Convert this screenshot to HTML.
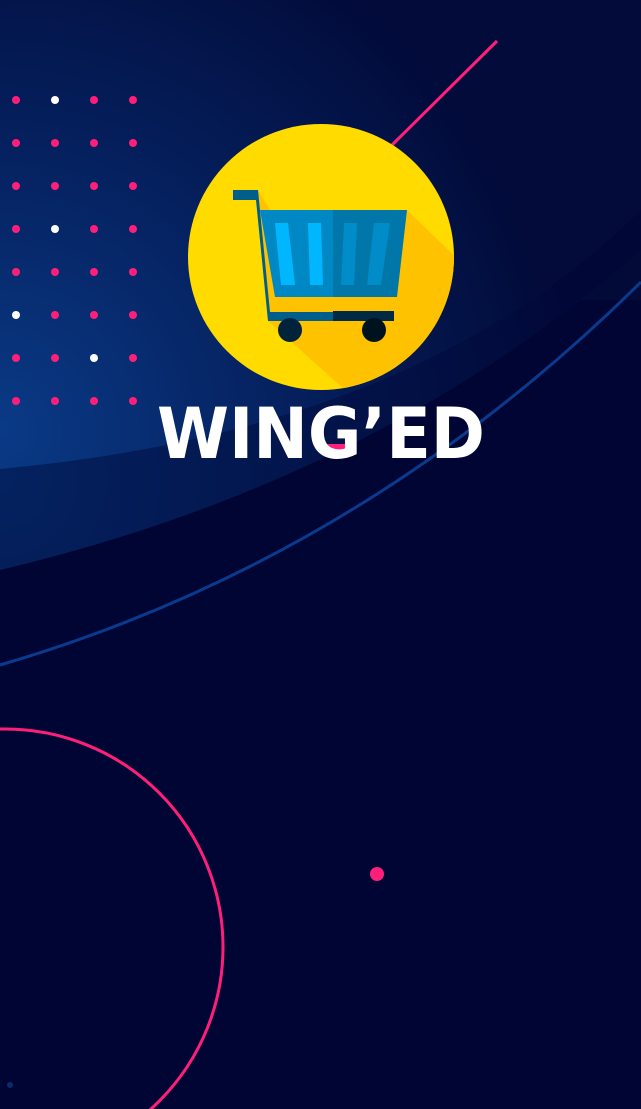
<!DOCTYPE html>
<html><head><meta charset="utf-8"><style>
html,body{margin:0;padding:0;background:#000533;overflow:hidden;width:641px;height:1109px;}
svg{display:block}
</style></head><body>
<svg width="641" height="1109" viewBox="0 0 641 1109" xmlns="http://www.w3.org/2000/svg">
<defs>
<radialGradient id="g1" cx="0" cy="430" r="560" gradientUnits="userSpaceOnUse">
<stop offset="0" stop-color="#0a3a86"/>
<stop offset="0.5" stop-color="#05215f"/>
<stop offset="1" stop-color="#020b3a"/>
</radialGradient>
<radialGradient id="g2" cx="0" cy="480" r="600" gradientUnits="userSpaceOnUse">
<stop offset="0" stop-color="#042260"/>
<stop offset="1" stop-color="#010838"/>
</radialGradient>
</defs>
<rect width="641" height="1109" fill="#000533"/>
<rect width="641" height="300" fill="#020a38"/>
<path d="M0 0 H641 V250 Q380 480 0 570 Z" fill="url(#g2)"/>
<path d="M0 0 H641 V210 Q420 430 0 469 Z" fill="url(#g1)"/>
<path d="M0 665 Q360 560 641 282" stroke="#0a3a8e" stroke-width="3" fill="none"/>
<line x1="392" y1="145" x2="497" y2="41" stroke="#ff1f7a" stroke-width="3"/>
<g fill="#ff1f7a">
<circle cx="16" cy="100" r="4"/><circle cx="94" cy="100" r="4"/><circle cx="133" cy="100" r="4"/>
<circle cx="16" cy="143" r="4"/><circle cx="55" cy="143" r="4"/><circle cx="94" cy="143" r="4"/><circle cx="133" cy="143" r="4"/>
<circle cx="16" cy="186" r="4"/><circle cx="55" cy="186" r="4"/><circle cx="94" cy="186" r="4"/><circle cx="133" cy="186" r="4"/>
<circle cx="16" cy="229" r="4"/><circle cx="94" cy="229" r="4"/><circle cx="133" cy="229" r="4"/>
<circle cx="16" cy="272" r="4"/><circle cx="55" cy="272" r="4"/><circle cx="94" cy="272" r="4"/><circle cx="133" cy="272" r="4"/>
<circle cx="55" cy="315" r="4"/><circle cx="94" cy="315" r="4"/><circle cx="133" cy="315" r="4"/>
<circle cx="16" cy="358" r="4"/><circle cx="55" cy="358" r="4"/><circle cx="133" cy="358" r="4"/>
<circle cx="16" cy="401" r="4"/><circle cx="55" cy="401" r="4"/><circle cx="94" cy="401" r="4"/><circle cx="133" cy="401" r="4"/>
</g>
<g fill="#ffffff">
<circle cx="55" cy="100" r="4"/><circle cx="55" cy="229" r="4"/><circle cx="16" cy="315" r="4"/><circle cx="94" cy="358" r="4"/>
</g>
<circle cx="5" cy="947" r="218" stroke="#ff1f7a" stroke-width="3" fill="none"/>
<circle cx="377" cy="874" r="7" fill="#ff1f7a"/>
<circle cx="10" cy="1085" r="3" fill="#0a2a6a"/>
<!-- logo -->
<circle cx="321" cy="257" r="133" fill="#ffdb00"/>
<clipPath id="cc"><circle cx="321" cy="257" r="133"/></clipPath>
<g clip-path="url(#cc)" fill="#ffc200">
<path d="M233 200 L258 190 L270 210 L407 210 L500 300 L500 430 L390 430 L268 321 L256 200 Z"/>
</g>
<path d="M233 190 L258 190 L270 312 L394 312 L394 321 L268 321 L256 200 L233 200 Z" fill="#005f8a"/>
<path d="M333 311 H394 V321 H333 Z" fill="#002a44"/>
<path d="M260 210 H333 V297 H275 Z" fill="#0088c4"/>
<path d="M333 210 H407 L397 297 H333 Z" fill="#0077a8"/>
<path d="M275 223 H288 L295 285 H281 Z" fill="#00b7ff"/>
<path d="M308 223 H321 L323 285 H310 Z" fill="#00b7ff"/>
<path d="M344 223 H357 L354 285 H341 Z" fill="#008cc8"/>
<path d="M374 223 H390 L381 285 H367 Z" fill="#008cc8"/>
<circle cx="290" cy="330" r="12" fill="#00223a"/>
<circle cx="374" cy="330" r="12" fill="#00121e"/>
<rect x="322" y="444" width="28" height="6" fill="#ff1f7a"/>
<text x="157" y="458" font-family="DejaVu Sans Condensed, DejaVu Sans, sans-serif" font-weight="bold" font-size="70" fill="#ffffff" textLength="328" lengthAdjust="spacingAndGlyphs">WING’ED</text>
</svg>
</body></html>
